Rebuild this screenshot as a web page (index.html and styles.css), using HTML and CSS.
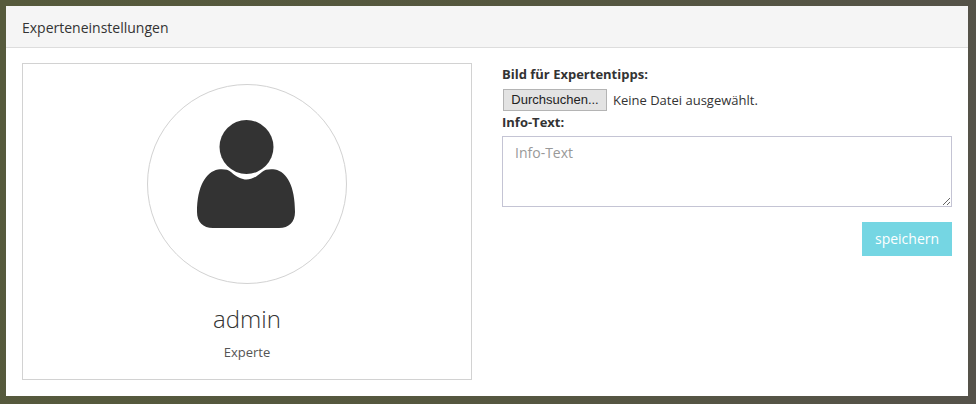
FILE: index.html
```
<!DOCTYPE html>
<html lang="de">
<head>
<meta charset="utf-8">
<title>Experteneinstellungen</title>
<link rel="stylesheet" href="styles.css">
</head>
<body>
<section class="panel">
  <header class="panel-head">Experteneinstellungen</header>
  <div class="panel-body">
    <div class="profile">
      <div class="avatar">
        <svg class="avatar-icon" width="100" height="108" viewBox="0 0 100 108" aria-hidden="true">
          <circle cx="49.5" cy="27" r="27" fill="#333"/>
          <path fill="#333" d="M21 49.500C27 49 31 49.500 34 52C40 57.500 45 59.500 49.500 59.500C54 59.500 59 57.500 65 52C68 49.500 72 49 78 49.500C90 52 98 66 98 92C98 102 92 108 82 108L16 108C6 108 0 102 0 92C0 66 9 52 21 49.500Z"/>
        </svg>
      </div>
      <div class="profile-name">admin</div>
      <div class="profile-role">Experte</div>
    </div>
    <form class="settings">
      <label class="field-label">Bild für Expertentipps:</label>
      <div class="file-row">
        <span class="file-btn">Durchsuchen...</span>
        <span class="file-name">Keine Datei ausgewählt.</span>
      </div>
      <label class="field-label">Info-Text:</label>
      <textarea class="info-text" placeholder="Info-Text"></textarea>
      <div class="actions"><button type="button" class="save">speichern</button></div>
    </form>
  </div>
</section>
</body>
</html>
```
FILE: styles.css
```
* { box-sizing: border-box; }
html, body { height: 100%; }
body {
  margin: 0;
  padding: 6px 8px 8px 6px;
  overflow: hidden;
  background: linear-gradient(100deg, #565a3c 0%, #55573f 50%, #55524a 100%);
  font-family: "Open Sans", "Liberation Sans", sans-serif;
  font-size: 13px;
  color: #333;
}
.panel {
  height: 390px;
  background: #fff;
  display: flex;
  flex-direction: column;
}
.panel-head {
  height: 42px;
  flex: none;
  padding: 0 16px;
  background: #f5f5f5;
  border-bottom: 1px solid #ddd;
  font-size: 14px;
  line-height: 43px;
}
.panel-body {
  display: flex;
  gap: 30px;
  padding: 15px 16px 16px;
  flex: 1;
}
.profile {
  width: 450px;
  flex: none;
  height: 317px;
  border: 1px solid #d2d2d2;
  display: flex;
  flex-direction: column;
  align-items: center;
  padding-top: 20px;
}
.avatar {
  width: 200px;
  height: 200px;
  border: 1px solid #d2d2d2;
  border-radius: 50%;
  display: flex;
  justify-content: center;
  padding-top: 35px;
}
.avatar-icon { display: block; }
.profile-name {
  margin-top: 18px;
  font-size: 24px;
  font-weight: 300;
  line-height: 34px;
  color: #333;
}
.profile-role {
  margin-top: 7px;
  font-size: 13px;
  line-height: 18px;
  color: #555;
}
.settings {
  flex: 1;
  display: flex;
  flex-direction: column;
  align-items: stretch;
}
.field-label {
  font-weight: 700;
  font-size: 13px;
  line-height: 18px;
  color: #333;
  display: block;
}
.settings > .field-label:first-child { margin-top: 2px; }
.file-row {
  display: flex;
  align-items: center;
  gap: 6px;
  height: 22px;
  margin: 6px 0 2px 1px;
}
.file-btn {
  width: 104px;
  height: 22px;
  background: #e3e3e3;
  border: 1px solid #b4b4b4;
  font-family: "Liberation Sans", sans-serif;
  font-size: 13px;
  line-height: 20px;
  text-align: center;
  color: #222;
}
.file-name { font-size: 13px; color: #333; }
.info-text {
  display: block;
  width: 450px;
  height: 71px;
  margin-top: 5px;
  padding: 6px 12px;
  border: 1px solid #c4c4d4;
  border-radius: 0;
  outline: none;
  font-family: inherit;
  font-size: 14px;
  line-height: 20px;
}
.info-text::placeholder { color: #999; opacity: 1; }
.actions {
  display: flex;
  justify-content: flex-end;
  margin-top: 15px;
}
.save {
  width: 90px;
  height: 34px;
  border: 0;
  padding: 0;
  background: #75d6e3;
  color: #fff;
  font-family: inherit;
  font-size: 14px;
  line-height: 34px;
}
```
